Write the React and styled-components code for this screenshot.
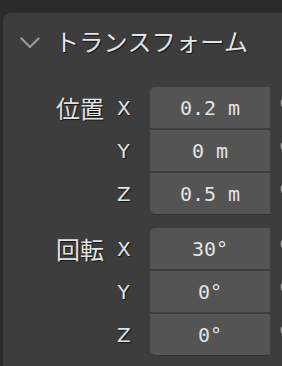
import React from "react";
import styled, { createGlobalStyle } from "styled-components";

const Global = createGlobalStyle`
  html, body { margin: 0; padding: 0; background: #2b2b2b; overflow: hidden; }
  body { width: 282px; height: 366px; }
`;

const Page = styled.div`
  width: 282px;
  height: 366px;
  overflow: hidden;
  padding-top: 13px;
  padding-left: 3px;
  box-sizing: border-box;
`;

const Panel = styled.div`
  background: #3d3d3d;
  border-top-left-radius: 8px;
  height: 400px;
  width: 300px;
`;

const Header = styled.div`
  display: flex;
  align-items: center;
  height: 55px;
  padding-left: 17px;
  gap: 15px;
  color: #e4e4e4;
  font-family: "Noto Sans CJK JP", "DejaVu Sans", sans-serif;
  font-size: 24px;
  text-shadow: 1px 1px 1px #151515;
  letter-spacing: 0.3px;
`;

const Chevron = styled.svg`
  width: 20px;
  height: 12px;
  flex: none;
  margin-top: 4px;
`;

const Body = styled.div`
  display: flex;
  flex-direction: column;
  gap: 14px;
  padding-top: 19px;
`;

const Group = styled.div`
  display: flex;
  flex-direction: column;
  gap: 2px;
`;

const Row = styled.div`
  display: grid;
  grid-template-columns: 127px 120px 30px;
  column-gap: 20px;
  height: 41px;
  align-items: center;
`;

const LabelCell = styled.div`
  display: flex;
  justify-content: flex-end;
  align-items: center;
  gap: 13px;
  color: #e2e2e2;
  text-shadow: 1px 1px 1px #151515;
`;

const MainLabel = styled.span`
  font-family: "Noto Sans CJK JP", "DejaVu Sans", sans-serif;
  font-size: 24px;
  line-height: 1;
`;

const Axis = styled.span`
  font-family: "DejaVu Sans", sans-serif;
  font-size: 20px;
  line-height: 1;
  width: 13px;
  text-align: center;
`;

const Field = styled.div`
  height: 41px;
  background: #545454;
  display: flex;
  align-items: center;
  justify-content: center;
  color: #e3e3e3;
  font-family: "DejaVu Sans Mono", monospace;
  font-size: 20px;
  border-radius: ${(p) =>
    p.$pos === "first" ? "5px 0 0 0" : p.$pos === "last" ? "0 0 0 5px" : "0"};
  box-shadow: ${(p) => (p.$pos === "last" ? "0 1px 0 #333" : "none")};
`;

const Decorator = styled.svg`
  width: 15px;
  height: 41px;
  overflow: visible;
  margin-left: -14px;
`;

const groups = [
  {
    label: "位置",
    rows: [
      ["X", "0.2 m"],
      ["Y", "0 m"],
      ["Z", "0.5 m"],
    ],
  },
  {
    label: "回転",
    rows: [
      ["X", "30°"],
      ["Y", "0°"],
      ["Z", "0°"],
    ],
  },
];

export default function App() {
  return (
    <Page>
      <Global />
      <Panel>
        <Header>
          <Chevron viewBox="0 0 20 12">
            <path
              d="M1.5 1.5 L10 10 L18.5 1.5"
              fill="none"
              stroke="#9a9a9a"
              strokeWidth="2.2"
              strokeLinecap="round"
              strokeLinejoin="round"
            />
          </Chevron>
          <span>トランスフォーム</span>
        </Header>
        <Body>
          {groups.map((g) => (
            <Group key={g.label}>
              {g.rows.map(([axis, value], i) => (
                <Row key={axis}>
                  <LabelCell>
                    {i === 0 && <MainLabel>{g.label}</MainLabel>}
                    <Axis>{axis}</Axis>
                  </LabelCell>
                  <Field $pos={i === 0 ? "first" : i === 2 ? "last" : "mid"}>
                    {value}
                  </Field>
                  <Decorator viewBox="0 0 15 41">
                    <circle
                      cx="11"
                      cy="16"
                      r="5.5"
                      fill="none"
                      stroke="#9a9a9a"
                      strokeWidth="2"
                    />
                  </Decorator>
                </Row>
              ))}
            </Group>
          ))}
        </Body>
      </Panel>
    </Page>
  );
}
